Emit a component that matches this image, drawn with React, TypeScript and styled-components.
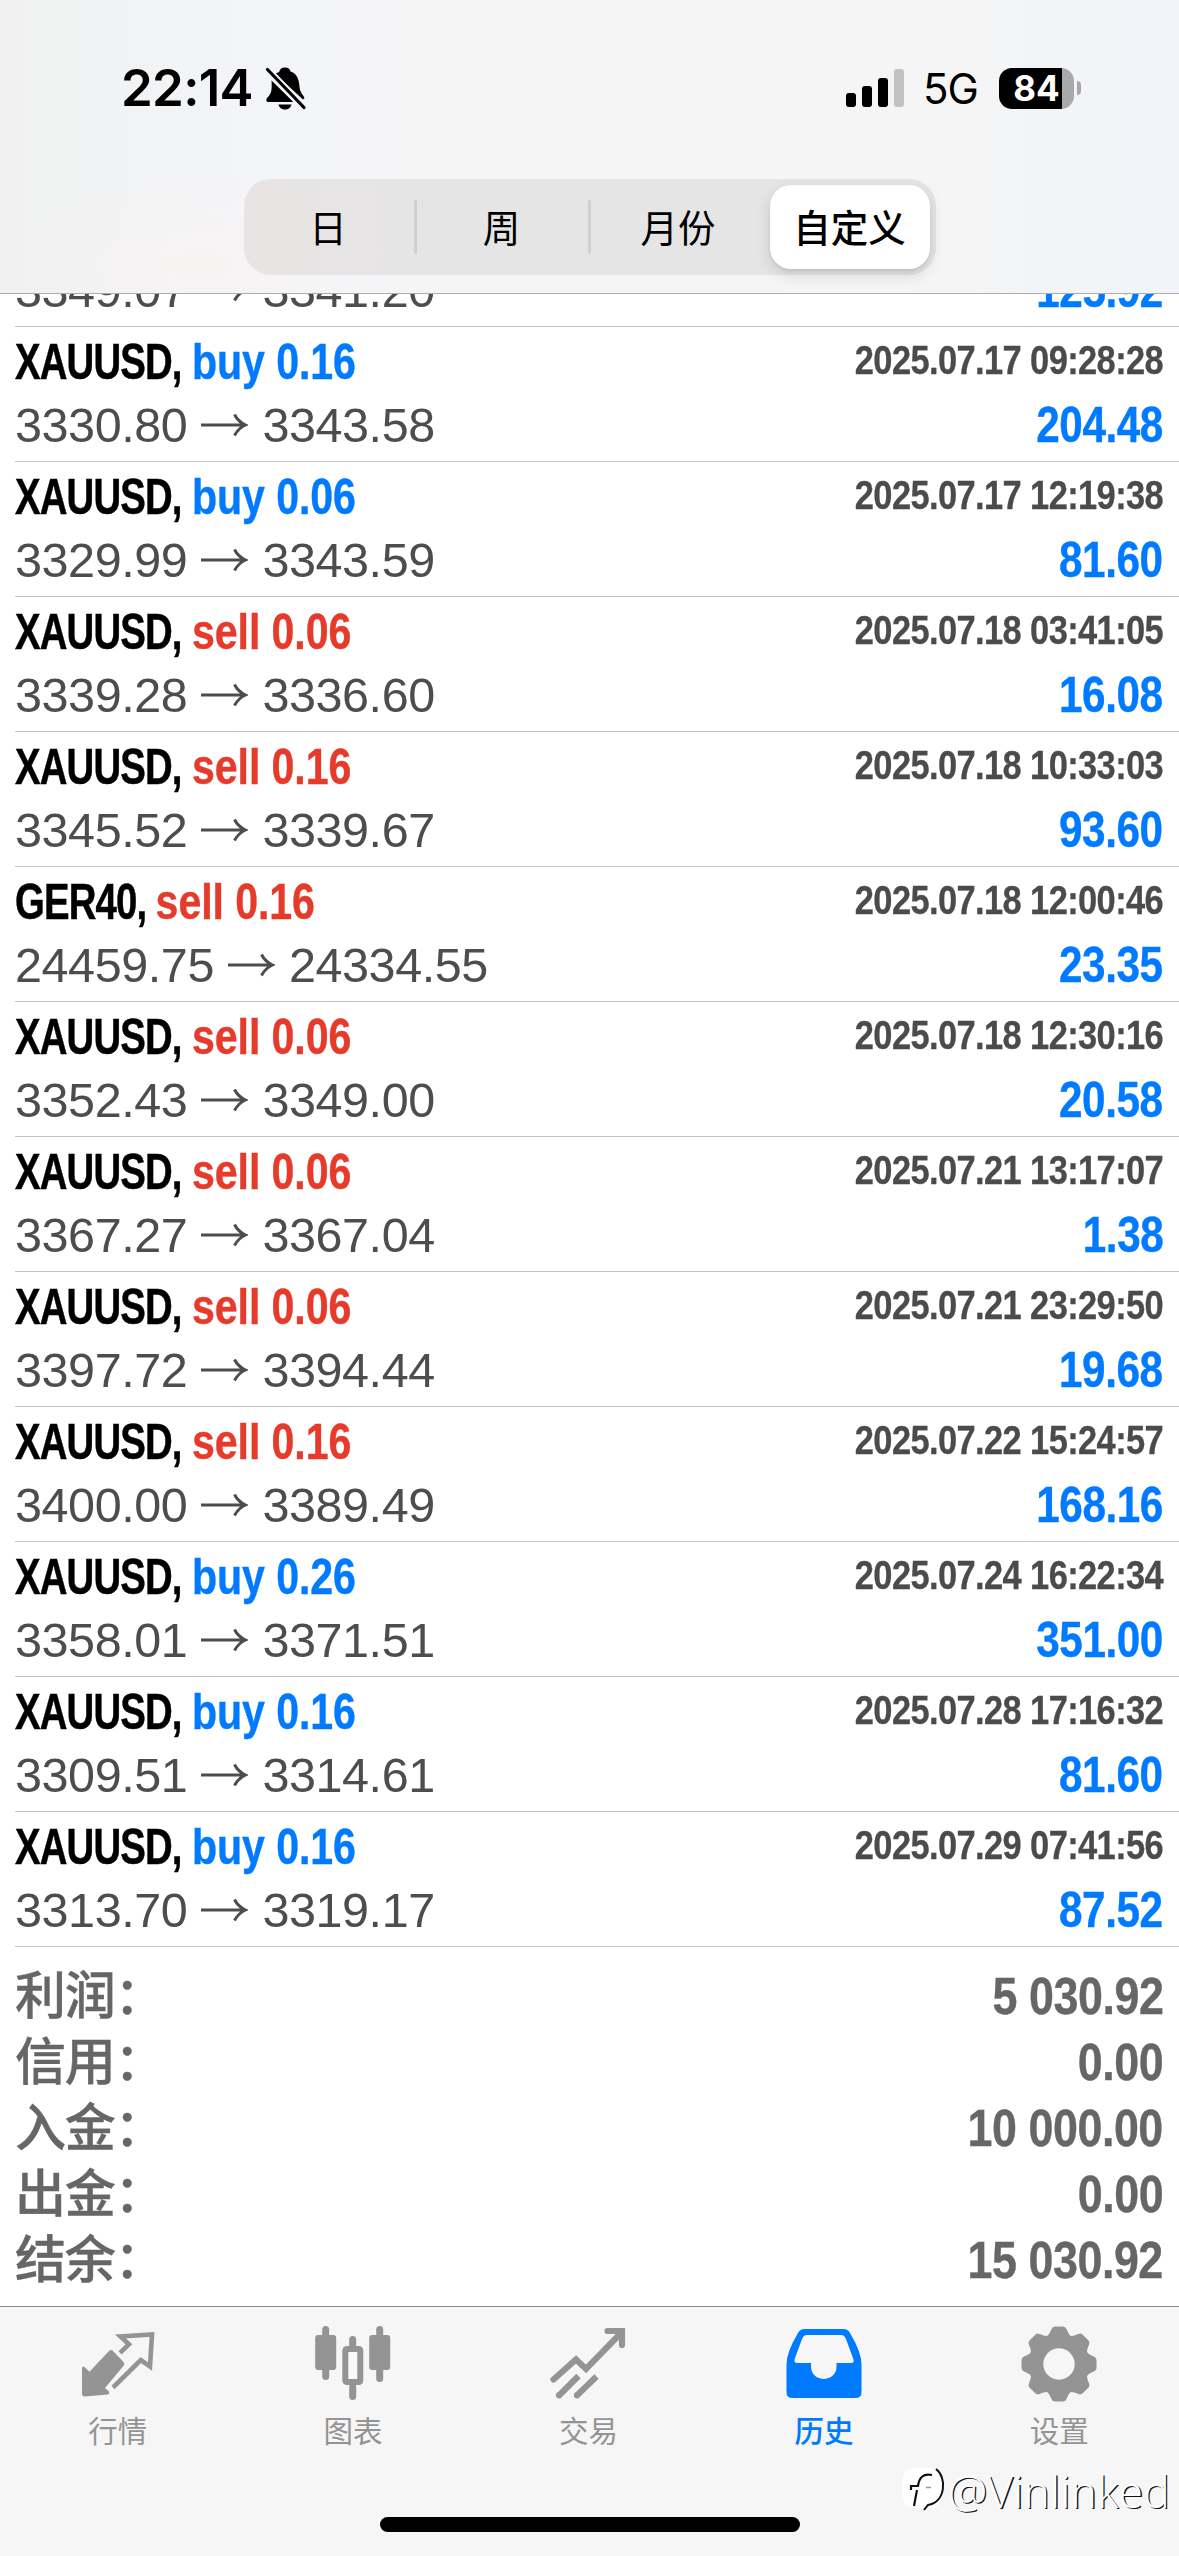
import React from "react";
import styled, { createGlobalStyle } from "styled-components";

const latin = `"Liberation Sans", "Noto Sans CJK SC", Arial, sans-serif`;
const cjk = `"Noto Sans CJK SC", "Noto Sans", sans-serif`;
const blue = "#007aff";
const red = "#e63a2b";

const GlobalStyle = createGlobalStyle`
  *, *::before, *::after { box-sizing: border-box; }
  html, body { margin: 0; padding: 0; background: #fff; }
`;

const Screen = styled.div`
  width: 1179px;
  height: 2556px;
  display: flex;
  flex-direction: column;
  background: #fff;
  overflow: hidden;
  font-family: ${latin};
`;

const Header = styled.header`
  flex: none;
  height: 294px;
  border-bottom: 1px solid #adadae;
  background:
    radial-gradient(ellipse 190px 90px at 200px 265px, rgba(248, 243, 242, 0.8), rgba(248, 243, 242, 0)),
    linear-gradient(90deg, #f0f1f0 0, #f2f3f5 140px, #f4f5f9 280px, #f5f5f6 420px, #f5f5f5 960px, #f2f4f8 1060px, #f1f4f8 100%);
`;

const StatusBar = styled.div`
  height: 179px;
  padding: 0 98px 0 121px;
  display: flex;
  justify-content: space-between;
`;

const StatusGroup = styled.div`
  height: 176px;
  display: flex;
  align-items: center;
`;

const Time = styled.span`
  width: 144px;
  font: 600 51px/60px Inter, sans-serif;
  letter-spacing: -0.7px;
`;

const Network = styled.span`
  width: 95px;
  padding-left: 19px;
  font: 400 42px/50px Inter, sans-serif;
  letter-spacing: -1px;
  margin-top: 2px;
`;

const Battery = styled.div`
  width: 75px;
  height: 41px;
  border-radius: 13px;
  display: grid;
  place-items: center;
  color: #fff;
  font: 700 35px/41px Inter, sans-serif;
  background: linear-gradient(90deg, #000 63px, #a9a9ad 63px);
`;

const BatteryTip = styled.i`
  width: 4px;
  height: 14px;
  margin-left: 3px;
  border-radius: 0 5px 5px 0;
  background: #a9a9ad;
`;

const Segments = styled.nav`
  width: 692px;
  height: 96px;
  margin: 0 auto;
  padding: 6px;
  display: grid;
  grid-template-columns: 165px 174px 181px 160px;
  border-radius: 27px;
  background: linear-gradient(90deg, #e8e4e4, #e5e5e6 35%, #e5e5e5);
`;

const Segment = styled.button<{ $active?: boolean; $divider?: boolean; $inset?: number }>`
  position: relative;
  border: 0;
  padding: 0 ${(p) => p.$inset ?? 0}px 3px 0;
  border-radius: 21px;
  color: #000;
  font: ${(p) => (p.$active ? 500 : 400)} 37.5px/81px ${cjk};
  background: ${(p) => (p.$active ? "#fff" : "transparent")};
  box-shadow: ${(p) => (p.$active ? "0 6px 16px rgba(0,0,0,.13), 0 2px 3px rgba(0,0,0,.06)" : "none")};
  &::after {
    content: "";
    display: ${(p) => (p.$divider ? "block" : "none")};
    position: absolute;
    right: -2px;
    top: 15px;
    width: 3px;
    height: 54px;
    border-radius: 2px;
    background: #cfcfd1;
  }
`;

const History = styled.main`
  flex: none;
  height: 2012px;
  overflow: hidden;
`;

const Deals = styled.ul`
  list-style: none;
  margin: -102px 0 0;
  padding: 0;
`;

const Deal = styled.li`
  height: 135px;
  margin-left: 15px;
  padding: 4px 16px 0 0;
  border-bottom: 1px solid #c3c3c5;
`;

const Line = styled.div`
  height: 63px;
  display: flex;
  justify-content: space-between;
  align-items: flex-start;
  line-height: 63px;
  white-space: pre;
`;

const Title = styled.span`
  font-size: 50px;
  font-weight: 700;
  transform: scaleX(0.822);
  transform-origin: left;
`;

const Symbol = styled.span<{ $length: number }>`
  display: inline-block;
  color: #000;
  letter-spacing: -1.1px;
  -webkit-text-stroke: 0.5px #000;
  transform: scaleX(0.933);
  transform-origin: left;
  margin-right: ${(p) => 1.8 * (8 - p.$length) - 14.8}px;
`;

const Side = styled.span<{ $side: string }>`
  color: ${(p) => (p.$side === "buy" ? blue : red)};
  letter-spacing: -0.1px;
  -webkit-text-stroke: 0.4px currentColor;
`;

const Stamp = styled.time`
  font-size: 40px;
  line-height: 59px;
  font-weight: 700;
  color: #4b4b4e;
  letter-spacing: -0.7px;
  -webkit-text-stroke: 0.3px currentColor;
  transform: scaleX(0.861);
  transform-origin: right;
`;

const Prices = styled.span`
  display: flex;
  align-items: center;
  font-size: 48.5px;
  line-height: 62px;
  color: #4d4d50;
  letter-spacing: -0.42px;
`;

const ArrowIcon = styled.svg`
  width: 48px;
  height: 24px;
  margin: 0 14px 0 13px;
`;

const Amount = styled.span<{ $color: string; $size: number; $squeeze: number }>`
  font-size: ${(p) => p.$size}px;
  font-weight: 700;
  color: ${(p) => p.$color};
  letter-spacing: -0.5px;
  -webkit-text-stroke: 0.4px currentColor;
  transform: scaleX(${(p) => p.$squeeze});
  transform-origin: right;
  white-space: pre;
`;

const Summary = styled.section`
  padding: 16px 16px 0 15px;
`;

const SummaryRow = styled.div`
  height: 66px;
  display: flex;
  justify-content: space-between;
  align-items: flex-start;
  line-height: 66px;
`;

const SummaryLabel = styled.span`
  font: 500 51px/58px ${cjk};
  color: #666;
  letter-spacing: -1.2px;
  -webkit-text-stroke: 0.4px #666;
`;

const TabBar = styled.nav`
  position: relative;
  flex: 1;
  padding-right: 2px;
  border-top: 1px solid #8c8c8e;
  display: grid;
  grid-template-columns: repeat(5, 1fr);
  align-content: start;
  background: #f6f6f6;
`;

const Tab = styled.button<{ $active?: boolean }>`
  border: 0;
  padding: 18px 0 0;
  background: none;
  display: flex;
  flex-direction: column;
  align-items: center;
  color: ${(p) => (p.$active ? blue : "#949494")};
  font: ${(p) => (p.$active ? 500 : 400)} 29.5px/44px ${cjk};
  svg { width: 78px; height: 78px; margin-bottom: 4px; display: block; }
`;

const HomeIndicator = styled.div`
  position: absolute;
  left: 380px;
  top: 210px;
  width: 420px;
  height: 15px;
  border-radius: 8px;
  background: #000;
`;

const Watermark = styled.div`
  position: absolute;
  right: 9px;
  top: 154px;
  display: flex;
  align-items: center;
  color: #fff;
  font: 300 44px/60px "Open Sans", sans-serif;
  letter-spacing: 0.4px;
  text-shadow: 1.4px 1.2px 0 #111;
  svg { width: 44px; height: 50px; margin-right: 2px; }
`;

const BellOff = () => (
  <svg width="42" height="44" viewBox="0 0 42 44">
    <path d="M20 1.500c-3.500 0-5.500 2-5.800 4.500L10 7.800 38 33.500l1.500-1.500c-1-3-4.500-5-5-11C34 12 31 7 25.500 5.500 25 3 23 1.500 20 1.500Z" fill="#000" />
    <path d="M6.500 14.500 28.500 36H3c-2 0-2-3-.5-4.500C6 28 7.200 25 6.500 14.500Z" fill="#000" />
    <path d="M13.500 38.500h13c-.5 3-3.500 5-6.500 5s-6-2-6.500-5Z" fill="#000" />
    <path d="m3 4 35 37" stroke="#f3f4f8" strokeWidth="7" />
    <path d="m2.500 3.500 36.500 38" stroke="#000" strokeWidth="3.200" strokeLinecap="round" />
  </svg>
);

const Signal = () => (
  <svg width="58" height="38" viewBox="0 0 58 38">
    <rect x="0" y="24" width="10" height="14" rx="3" />
    <rect x="16" y="17" width="10" height="21" rx="3" />
    <rect x="32" y="9" width="10" height="29" rx="3" />
    <rect x="48" y="0" width="10" height="38" rx="3" fill="#c2c2c4" />
  </svg>
);

const Arrow = () => (
  <ArrowIcon viewBox="0 0 48 24" fill="none" stroke="currentColor" strokeWidth="3">
    <path d="M1 12h44M34.500 1.500Q38 8.500 45.500 12 38 15.500 34.500 22.500" />
  </ArrowIcon>
);

const QuotesIcon = () => (
  <svg viewBox="0 0 78 78" fill="currentColor">
    <path d="M29.500 26.500q2.500-2.800 5 0l10 10.500q1.800 2-.3 4.200L26 63l3.500 3q2 2.700-1 3.500L6 71.500q-3 .3-3-3V43q.5-2.500 2.500-1l5 4.800Z" />
    <path d="m41 28.800 9-8.600-8.500-7.700 31.500-2-2 32L61.800 36 34 63.500" transform="translate(0 -1)" fill="none" stroke="currentColor" strokeWidth="4.600" />
  </svg>
);

const ChartsIcon = () => (
  <svg viewBox="0 0 78 78" fill="currentColor" stroke="currentColor">
    <path d="M11.700 4.500v47M65.700 4.500v49M38.700 14.500v7M38.700 62v9.500" strokeWidth="7" strokeLinecap="round" />
    <rect x="1.200" y="10" width="21" height="35" rx="3" stroke="none" />
    <rect x="55.200" y="10" width="21" height="35" rx="3" stroke="none" />
    <rect x="31.300" y="24" width="15" height="33" rx="1.500" fill="#f9f9f9" strokeWidth="6" />
  </svg>
);

const TradeIcon = () => (
  <svg viewBox="0 0 78 78" fill="none" stroke="currentColor" strokeWidth="6.200">
    <path d="M4.500 54.500 27 34.500l10 9.500L72 8" strokeLinecap="round" />
    <path d="M58.500 6H73v14" strokeLinecap="round" />
    <path d="m10 70.500 19.500-19.500M27.800 70.500 47.500 51.500" />
    <circle cx="10" cy="70.300" r="3.100" fill="currentColor" stroke="none" />
    <circle cx="28" cy="70.300" r="3.100" fill="currentColor" stroke="none" />
  </svg>
);

const HistoryIcon = () => (
  <svg viewBox="0 0 78 78">
    <path
      fillRule="evenodd"
      fill="currentColor"
      d="M19.500 4h39q4.500 0 6.500 4 11.500 19 11.500 31.500V67q0 6-6 6h-63q-6 0-6-6V39.500Q1.500 27 13 8q2-4 6.500-4Zm2.500 6q-3.500 0-5 4L9.500 34.500q-.5 3.500 2.500 3.500h14v3.500c0 16.500 25.500 16.500 25.500 0V38H66q3.500 0 2.500-3.500L61 14q-1.500-4-5-4Z"
    />
  </svg>
);

const SettingsIcon = () => (
  <svg viewBox="-39 -39 78 78" fill="currentColor">
    <mask id="gear-hole">
      <rect x="-39" y="-39" width="78" height="78" fill="#fff" />
      <circle r="15.700" fill="#000" />
    </mask>
    <g mask="url(#gear-hole)">
      <circle r="29.500" />
      {[0, 45, 90, 135, 180, 225, 270, 315].map((a) => (
        <path key={a} transform={`rotate(${a})`} d="M-14-27c4-1 5-5 6.500-8q1-2.500 3.500-2.500h8q2.500 0 3.500 2.500C9-32 10-28 14-27Z" />
      ))}
    </g>
  </svg>
);

const tabs = [
  { label: "行情", icon: <QuotesIcon /> },
  { label: "图表", icon: <ChartsIcon /> },
  { label: "交易", icon: <TradeIcon /> },
  { label: "历史", icon: <HistoryIcon />, active: true },
  { label: "设置", icon: <SettingsIcon /> },
];

type Row = [string, string, string, string, string, string, string];
const deals: Row[] = [
  ["XAUUSD", "sell", "0.16", "3349.07", "3341.20", "", "125.92"],
  ["XAUUSD", "buy", "0.16", "3330.80", "3343.58", "2025.07.17 09:28:28", "204.48"],
  ["XAUUSD", "buy", "0.06", "3329.99", "3343.59", "2025.07.17 12:19:38", "81.60"],
  ["XAUUSD", "sell", "0.06", "3339.28", "3336.60", "2025.07.18 03:41:05", "16.08"],
  ["XAUUSD", "sell", "0.16", "3345.52", "3339.67", "2025.07.18 10:33:03", "93.60"],
  ["GER40", "sell", "0.16", "24459.75", "24334.55", "2025.07.18 12:00:46", "23.35"],
  ["XAUUSD", "sell", "0.06", "3352.43", "3349.00", "2025.07.18 12:30:16", "20.58"],
  ["XAUUSD", "sell", "0.06", "3367.27", "3367.04", "2025.07.21 13:17:07", "1.38"],
  ["XAUUSD", "sell", "0.06", "3397.72", "3394.44", "2025.07.21 23:29:50", "19.68"],
  ["XAUUSD", "sell", "0.16", "3400.00", "3389.49", "2025.07.22 15:24:57", "168.16"],
  ["XAUUSD", "buy", "0.26", "3358.01", "3371.51", "2025.07.24 16:22:34", "351.00"],
  ["XAUUSD", "buy", "0.16", "3309.51", "3314.61", "2025.07.28 17:16:32", "81.60"],
  ["XAUUSD", "buy", "0.16", "3313.70", "3319.17", "2025.07.29 07:41:56", "87.52"],
];

const totals = [
  ["利润：", "5 030.92"],
  ["信用：", "0.00"],
  ["入金：", "10 000.00"],
  ["出金：", "0.00"],
  ["结余：", "15 030.92"],
];

export default function App() {
  return (
    <Screen>
      <GlobalStyle />
      <Header>
        <StatusBar>
          <StatusGroup>
            <Time>22:14</Time>
            <BellOff />
          </StatusGroup>
          <StatusGroup>
            <Signal />
            <Network>5G</Network>
            <Battery>84</Battery>
            <BatteryTip />
          </StatusGroup>
        </StatusBar>
        <Segments>
          <Segment $divider $inset={8}>日</Segment>
          <Segment $divider>周</Segment>
          <Segment $inset={2}>月份</Segment>
          <Segment $active>自定义</Segment>
        </Segments>
      </Header>
      <History>
        <Deals>
          {deals.map(([symbol, side, volume, open, close, time, profit]) => (
            <Deal key={open}>
              <Line>
                {time && (
                  <>
                    <Title>
                      <Symbol $length={symbol.length + 2}>{symbol}, </Symbol>
                      <Side $side={side}>{side} {volume}</Side>
                    </Title>
                    <Stamp>{time}</Stamp>
                  </>
                )}
              </Line>
              <Line>
                <Prices>{open}<Arrow />{close}</Prices>
                <Amount $color={blue} $size={50} $squeeze={0.845}>{profit}</Amount>
              </Line>
            </Deal>
          ))}
        </Deals>
        <Summary>
          {totals.map(([label, value]) => (
            <SummaryRow key={label}>
              <SummaryLabel>{label}</SummaryLabel>
              <Amount $color="#666" $size={52} $squeeze={0.861}>{value}</Amount>
            </SummaryRow>
          ))}
        </Summary>
      </History>
      <TabBar>
        {tabs.map((t) => (
          <Tab key={t.label} $active={t.active}>
            {t.icon}
            {t.label}
          </Tab>
        ))}
        <HomeIndicator />
        <Watermark>
          <svg viewBox="0 0 44 50">
            <rect x="0" y="2" width="40" height="40" rx="13" fill="#fff" />
            <path d="M34 3c11 8 10 33-8 36l-4 5" fill="none" stroke="#111" strokeWidth="2" />
            <path d="M30 9c-9-2-13 3-14 11h-7v4M15 24l-3 16" fill="none" stroke="#111" strokeWidth="2.200" />
            <path d="M24 21.500h5" stroke="#999" strokeWidth="1.500" />
          </svg>
          @Vinlinked
        </Watermark>
      </TabBar>
    </Screen>
  );
}
